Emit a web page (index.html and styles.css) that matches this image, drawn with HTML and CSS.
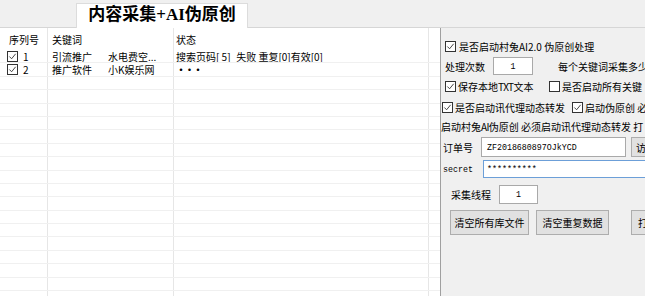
FILE: index.html
```html
<!DOCTYPE html>
<html lang="zh-CN">

<head>
    <meta charset="UTF-8">
    <title>内容采集+AI伪原创</title>
    <link rel="stylesheet" href="styles.css">
</head>

<body>
    <div class="topbar">
        <div class="tab">内容采集+AI伪原创</div>
    </div>

    <div class="main">
        <div class="list">
            <div class="row head">
                <div class="c c1">序列号</div>
                <div class="c c2">关键词</div>
                <div class="c c3">状态</div>
                <div class="c c4"></div>
            </div>
            <div class="row">
                <div class="c c1"><span class="cb"><svg viewBox="0 0 10 10" width="9" height="9"><path d="M1.5 5 L4 7.5 L8.5 2" fill="none" stroke="#333" stroke-width="1"/></svg></span>1</div>
                <div class="c c2"><span class="kw">引流推广</span>水电费空...</div>
                <div class="c c3">搜索页码[ 5]_失败 重复[0]有效[0]</div>
                <div class="c c4"></div>
            </div>
            <div class="row">
                <div class="c c1"><span class="cb"><svg viewBox="0 0 10 10" width="9" height="9"><path d="M1.5 5 L4 7.5 L8.5 2" fill="none" stroke="#333" stroke-width="1"/></svg></span>2</div>
                <div class="c c2"><span class="kw">推广软件</span>小K娱乐网</div>
                <div class="c c3"><span class="dots">···</span></div>
                <div class="c c4"></div>
            </div>
            <div class="row"><div class="c c1"></div><div class="c c2"></div><div class="c c3"></div><div class="c c4"></div></div>
            <div class="row"><div class="c c1"></div><div class="c c2"></div><div class="c c3"></div><div class="c c4"></div></div>
            <div class="row"><div class="c c1"></div><div class="c c2"></div><div class="c c3"></div><div class="c c4"></div></div>
            <div class="row"><div class="c c1"></div><div class="c c2"></div><div class="c c3"></div><div class="c c4"></div></div>
            <div class="row"><div class="c c1"></div><div class="c c2"></div><div class="c c3"></div><div class="c c4"></div></div>
            <div class="row"><div class="c c1"></div><div class="c c2"></div><div class="c c3"></div><div class="c c4"></div></div>
            <div class="row"><div class="c c1"></div><div class="c c2"></div><div class="c c3"></div><div class="c c4"></div></div>
            <div class="row"><div class="c c1"></div><div class="c c2"></div><div class="c c3"></div><div class="c c4"></div></div>
            <div class="row"><div class="c c1"></div><div class="c c2"></div><div class="c c3"></div><div class="c c4"></div></div>
            <div class="row"><div class="c c1"></div><div class="c c2"></div><div class="c c3"></div><div class="c c4"></div></div>
            <div class="row"><div class="c c1"></div><div class="c c2"></div><div class="c c3"></div><div class="c c4"></div></div>
            <div class="row"><div class="c c1"></div><div class="c c2"></div><div class="c c3"></div><div class="c c4"></div></div>
            <div class="row"><div class="c c1"></div><div class="c c2"></div><div class="c c3"></div><div class="c c4"></div></div>
            <div class="row"><div class="c c1"></div><div class="c c2"></div><div class="c c3"></div><div class="c c4"></div></div>
            <div class="row"><div class="c c1"></div><div class="c c2"></div><div class="c c3"></div><div class="c c4"></div></div>
            <div class="row"><div class="c c1"></div><div class="c c2"></div><div class="c c3"></div><div class="c c4"></div></div>
            <div class="row"><div class="c c1"></div><div class="c c2"></div><div class="c c3"></div><div class="c c4"></div></div>
        </div>

        <div class="panel">
            <div class="prow r1">
                <span class="cb"><svg viewBox="0 0 10 10" width="9" height="9"><path d="M1.5 5 L4 7.5 L8.5 2" fill="none" stroke="#333" stroke-width="1"/></svg></span>
                <span class="lbl">是否启动村兔AI2.0 伪原创处理</span>
            </div>
            <div class="prow r2">
                <span class="txt">处理次数</span>
                <span class="box num">1</span>
                <span class="txt far">每个关键词采集多少</span>
            </div>
            <div class="prow r3">
                <span class="cb"><svg viewBox="0 0 10 10" width="9" height="9"><path d="M1.5 5 L4 7.5 L8.5 2" fill="none" stroke="#333" stroke-width="1"/></svg></span>
                <span class="lbl w-save">保存本地<span class="narrow">TXT</span>文本</span>
                <span class="cb"></span>
                <span class="lbl">是否启动所有关键</span>
            </div>
            <div class="prow r4">
                <span class="cb"><svg viewBox="0 0 10 10" width="9" height="9"><path d="M1.5 5 L4 7.5 L8.5 2" fill="none" stroke="#333" stroke-width="1"/></svg></span>
                <span class="lbl w-proxy">是否启动讯代理动态转发</span>
                <span class="cb"><svg viewBox="0 0 10 10" width="9" height="9"><path d="M1.5 5 L4 7.5 L8.5 2" fill="none" stroke="#333" stroke-width="1"/></svg></span>
                <span class="lbl">启动伪原创 必</span>
            </div>
            <div class="prow r5">
                <span class="txt">启动村兔<span class="narrow">AI</span>伪原创 必须启动讯代理动态转发 打</span>
            </div>
            <div class="prow r6">
                <span class="txt w-order">订单号</span>
                <span class="box field">ZF2018680897OJkYCD</span>
                <span class="btn b-visit">访问</span>
            </div>
            <div class="prow r7">
                <span class="mono w-secret">secret</span>
                <span class="box field focus">**********</span>
            </div>
            <div class="prow r8">
                <span class="txt">采集线程</span>
                <span class="box num">1</span>
            </div>
            <div class="prow r9">
                <span class="btn b-all">清空所有库文件</span>
                <span class="btn b-dup">清空重复数据</span>
                <span class="btn b-open">打开</span>
            </div>
        </div>
    </div>
</body>

</html>
```

FILE: styles.css
```css
* {
    box-sizing: border-box;
}

body {
    margin: 0;
    width: 645px;
    height: 296px;
    overflow: hidden;
    background: #f0f0f0;
    font-family: "Noto Sans CJK SC", sans-serif;
    font-size: 10px;
    color: #000;
}

.topbar {
    height: 28px;
    border-bottom: 1px solid #d6d6d6;
    display: flex;
    align-items: flex-end;
}

.tab {
    margin-left: 76px;
    margin-bottom: -1px;
    width: 172px;
    height: 25px;
    background: #fff;
    border: 1px solid #dcdcdc;
    border-bottom: none;
    font-family: "Liberation Serif", "Noto Sans CJK SC", serif;
    font-weight: bold;
    font-size: 17px;
    line-height: 21px;
    text-align: center;
    white-space: nowrap;
}

.main {
    display: flex;
    height: 268px;
}

/* list view */
.list {
    width: 440px;
    flex: none;
    background: #fff;
    overflow: hidden;
}

.row {
    display: flex;
    height: 13.4px;
    line-height: 13px;
    border-bottom: 1px solid #f0f0f0;
    white-space: nowrap;
}

.row.head {
    height: 22px;
    border-bottom: none;
}

.c {
    height: 100%;
    border-right: 1px solid #e6e6e6;
    display: flex;
    align-items: center;
    overflow: hidden;
}

.c1 {
    width: 48px;
    padding-left: 7px;
}

.head .c1 {
    padding-left: 9px;
}

.c2 {
    width: 126px;
    padding-left: 4px;
}

.c3 {
    width: 255px;
    padding-left: 2px;
}

.c4 {
    flex: 1;
    border-right: none;
}

.kw {
    display: inline-block;
    width: 56px;
}

.dots {
    font-weight: bold;
    letter-spacing: -1.5px;
}

.list .cb {
    margin-right: 5px;
}

.cb {
    width: 11px;
    height: 11px;
    flex: none;
    background: #fff;
    border: 1px solid #333;
    display: inline-flex;
    align-items: center;
    justify-content: center;
}

.narrow {
    letter-spacing: -0.6px;
}

/* right settings panel */
.panel {
    flex: 1;
    border-left: 1px solid #a0a0a0;
    overflow: hidden;
    white-space: nowrap;
}

.prow {
    display: flex;
    align-items: center;
    height: 20px;
}

.prow > * {
    flex-shrink: 0;
}

.r1 {
    margin-top: 8px;
    padding-left: 4px;
}

.r2 {
    padding-left: 4px;
}

.r3 {
    padding-left: 4px;
}

.r4 {
    margin-top: 1px;
    padding-left: 1px;
}

.r5 {
    height: 18px;
}

.r6 {
    margin-top: 1px;
    height: 22px;
    padding-left: 2px;
}

.r7 {
    margin-top: 1px;
    padding-left: 2px;
}

.r8 {
    margin-top: 4px;
    height: 22px;
    padding-left: 10px;
}

.r9 {
    margin-top: 4px;
    height: 27px;
    padding-left: 9px;
}

.lbl {
    margin-left: 3px;
}

.r3 .lbl,
.r4 .lbl {
    margin-left: 2px;
}

.w-save {
    width: 89px;
    margin-right: 2px;
}

.w-proxy {
    width: 117px;
}

.far {
    margin-left: 25px;
}

.box {
    background: #fff;
    border: 1px solid #a9a9a9;
    display: flex;
    align-items: center;
    font-family: "Liberation Mono", monospace;
    font-size: 8.3px;
}

.num {
    width: 40px;
    height: 18px;
    margin-left: 8px;
    justify-content: center;
}

.r8 .num {
    width: 39px;
    height: 19px;
}

.field {
    width: 145px;
    height: 20px;
    padding-left: 5px;
}

.focus {
    width: 170px;
    height: 18px;
    border-color: #6c9fd8;
    padding-left: 3px;
}

.w-order {
    width: 38px;
}

.mono {
    font-family: "Liberation Mono", monospace;
    font-size: 8.3px;
}

.w-secret {
    width: 40px;
}

.btn {
    height: 20px;
    background: #e1e1e1;
    border: 1px solid #adadad;
    display: flex;
    align-items: center;
    justify-content: flex-start;
}

.b-visit {
    width: 60px;
    margin-left: 5px;
    padding-left: 4px;
}

.r9 .btn {
    height: 25px;
    justify-content: center;
}

.b-all {
    width: 79px;
}

.b-dup {
    width: 73px;
    margin-left: 7px;
}

.r9 .b-open {
    width: 60px;
    margin-left: 22px;
    justify-content: flex-start;
    padding-left: 6px;
}
```
